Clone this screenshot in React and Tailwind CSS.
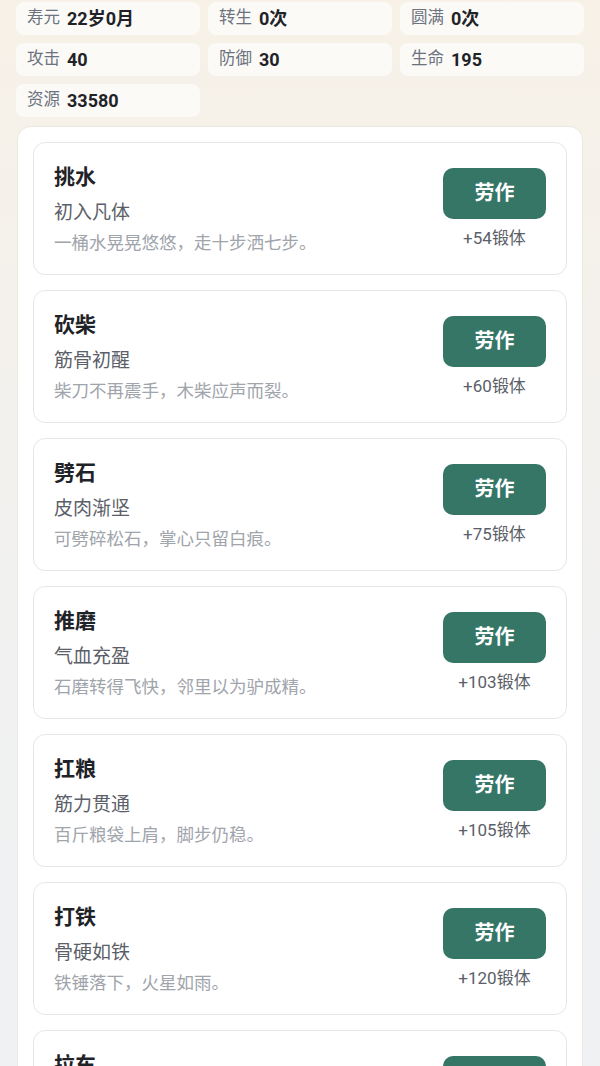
import React from "react";

const stats = [
  { label: "寿元", value: "22岁0月" },
  { label: "转生", value: "0次" },
  { label: "圆满", value: "0次" },
  { label: "攻击", value: "40" },
  { label: "防御", value: "30" },
  { label: "生命", value: "195" },
  { label: "资源", value: "33580" },
];

const labors = [
  { name: "挑水", stage: "初入凡体", desc: "一桶水晃晃悠悠，走十步洒七步。", gain: 54 },
  { name: "砍柴", stage: "筋骨初醒", desc: "柴刀不再震手，木柴应声而裂。", gain: 60 },
  { name: "劈石", stage: "皮肉渐坚", desc: "可劈碎松石，掌心只留白痕。", gain: 75 },
  { name: "推磨", stage: "气血充盈", desc: "石磨转得飞快，邻里以为驴成精。", gain: 103 },
  { name: "扛粮", stage: "筋力贯通", desc: "百斤粮袋上肩，脚步仍稳。", gain: 105 },
  { name: "打铁", stage: "骨硬如铁", desc: "铁锤落下，火星如雨。", gain: 120 },
  { name: "拉车", stage: "力贯千钧", desc: "满载的板车拉上坡，气不喘。", gain: 140 },
];

function StatCell({ label, value }) {
  return (
    <div className="h-[33px] rounded-lg bg-white/65 px-[11px] flex items-center gap-[7px]">
      <span className="text-[16.5px] text-[#6b7280]">{label}</span>
      <span className="text-[18px] font-bold text-[#1f2328]">{value}</span>
    </div>
  );
}

function LaborCard({ name, stage, desc, gain }) {
  return (
    <div className="rounded-xl border-[1.5px] border-[#e6e6e6] bg-white px-5 py-5 flex items-center justify-between">
      <div>
        <div className="text-[21px] leading-[28px] font-bold text-[#1f2328]">{name}</div>
        <div className="mt-[9px] text-[19px] leading-[26px] text-[#5b6068]">{stage}</div>
        <div className="mt-[6px] text-[17.5px] leading-[22px] text-[#a0a4ab]">{desc}</div>
      </div>
      <div className="flex flex-col items-center">
        <button className="w-[103px] h-[51px] rounded-[10px] bg-[#367667] text-white text-[20px] font-semibold">
          劳作
        </button>
        <div className="mt-[7px] text-[17px] leading-[24px] text-[#5b6068]">+{gain}锻体</div>
      </div>
    </div>
  );
}

export default function App() {
  return (
    <div
      className="min-h-screen bg-gradient-to-b from-[#f7f1e7] via-[#f1f1f0] to-[#eff1f4] pt-[2px]"
      style={{ fontFamily: 'Roboto, "Noto Sans CJK SC", sans-serif' }}
    >
      <div className="grid grid-cols-3 gap-x-2 gap-y-2 px-4">
        {stats.map((s) => (
          <StatCell key={s.label} {...s} />
        ))}
      </div>

      <div className="mx-[17px] mt-[9px] rounded-[14px] border border-[#ebe8e2] bg-white p-[15px] flex flex-col gap-[15px]">
        {labors.map((l) => (
          <LaborCard key={l.name} {...l} />
        ))}
      </div>
    </div>
  );
}
